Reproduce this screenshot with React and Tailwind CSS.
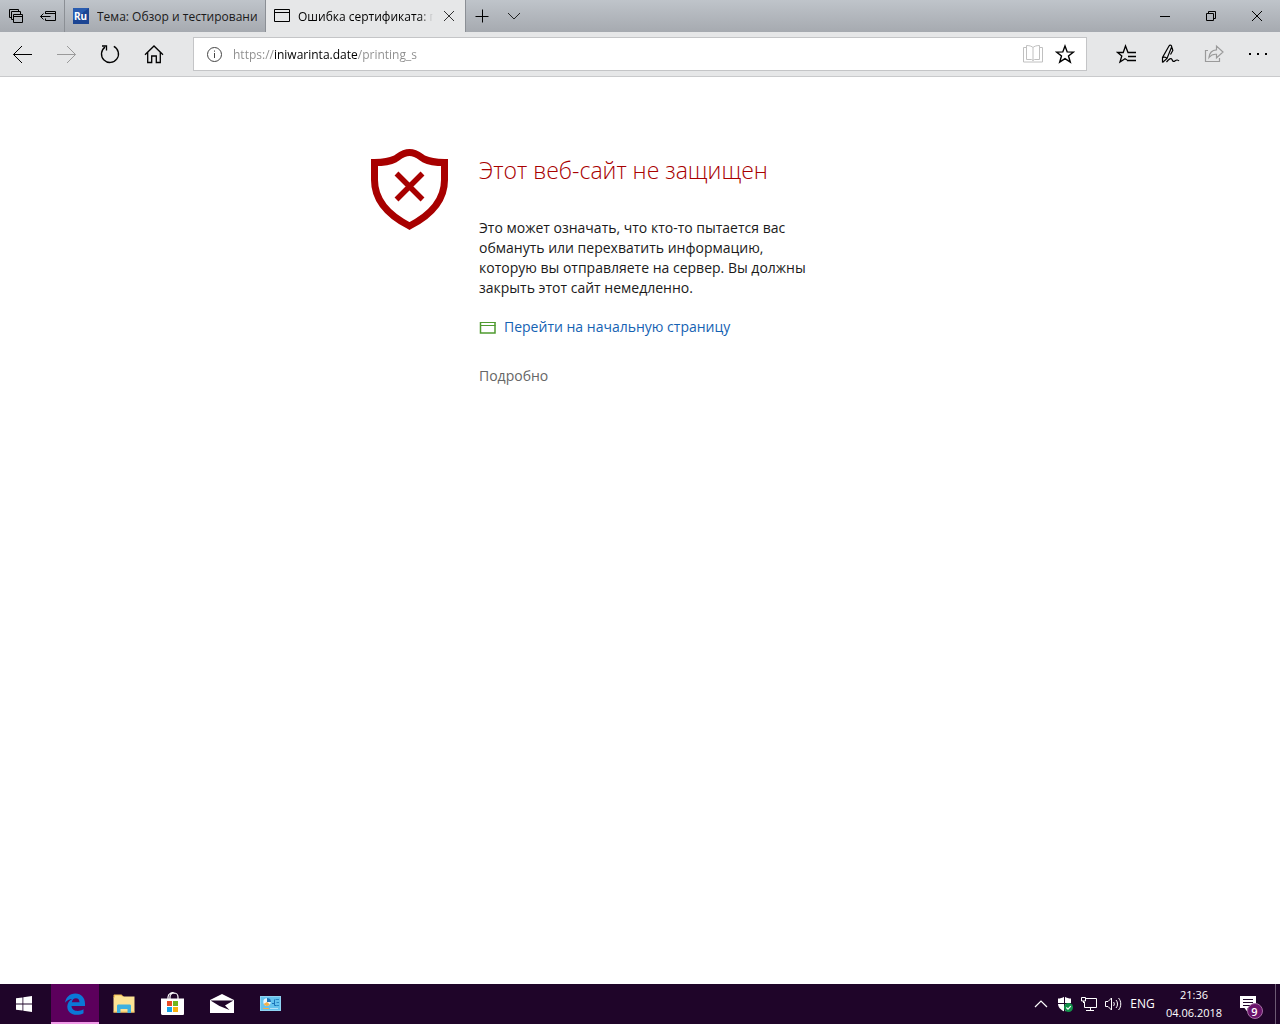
import React from "react";

const Icon = ({ size = 20, children, className = "" }) => (
  <svg
    width={size}
    height={size}
    viewBox={`0 0 ${size} ${size}`}
    fill="none"
    stroke="currentColor"
    strokeWidth="1"
    className={`block shrink-0 ${className}`}
    aria-hidden="true"
  >
    {children}
  </svg>
);

/* ---------- tab strip ---------- */

const StripButton = ({ label, className = "w-8", children }) => (
  <button
    type="button"
    aria-label={label}
    className={`flex h-8 shrink-0 items-center justify-center ${className}`}
  >
    {children}
  </button>
);

const TabStrip = () => (
  <header className="flex h-8 bg-linear-to-b from-[#bfc4ca] to-[#a6aab0] text-black">
    <StripButton label="Отложенные вкладки">
      <Icon size={16}>
        <path d="M3.500 9.500h-2v-8h9v2" />
        <path d="M5.500 11.500h-2v-8h9v3" />
        <path d="M5.500 6.500h9v8h-9zM5.500 8.500h9" />
      </Icon>
    </StripButton>
    <StripButton label="Отложить вкладки">
      <Icon size={16}>
        <path d="M5.500 6V3.500h10v9h-10V10.500M5.500 5.500h10" />
        <path d="M0.500 8.500h10M3.500 5.500l-3 3l3 3" />
      </Icon>
    </StripButton>

    <div className="flex w-[202px] items-center border-x border-[#8b8f95] pl-2">
      <svg width="16" height="16" viewBox="0 0 16 16" className="shrink-0" aria-hidden="true">
        <rect width="16" height="16" fill="#1c4593" />
        <path d="M0 0h16L0 12z" fill="#2a5caf" />
        <text x="1" y="12" fontSize="10" fontWeight="700" fontFamily="Noto Sans, sans-serif" fill="#fff">
          Ru
        </text>
      </svg>
      <button
        type="button"
        className="ml-2 flex-1 overflow-hidden pt-0.5 text-left text-[12px] leading-4 whitespace-nowrap text-[#1a1a1a]"
      >
        Тема: Обзор и тестирование
      </button>
      <span className="w-2 shrink-0" />
    </div>

    <div className="flex w-[199px] items-center bg-[#e6e7e8] pl-2">
      <Icon size={16}>
        <path d="M0.500 1.500h15v12h-15zM0.500 4.500h15" />
      </Icon>
      <button
        type="button"
        className="ml-2 flex-1 overflow-hidden mask-r-from-90% pt-0.5 text-left text-[12px] leading-4 whitespace-nowrap"
      >
        Ошибка сертификата: переход
      </button>
      <StripButton label="Закрыть вкладку">
        <Icon size={12} className="text-[#333]">
          <path d="M1 1l10 10M11 1L1 11" />
        </Icon>
      </StripButton>
    </div>

    <div className="flex border-l border-[#8b8f95]">
      <StripButton label="Новая вкладка">
        <Icon size={14}>
          <path d="M7.500 0.500v13M0.500 7.500h13" />
        </Icon>
      </StripButton>
      <StripButton label="Показать эскизы вкладок">
        <Icon size={14} className="text-[#222]">
          <path d="M1 4l6 6l6-6" />
        </Icon>
      </StripButton>
    </div>

    <div className="ml-auto flex">
      <StripButton label="Свернуть" className="w-[46px]">
        <Icon size={12}>
          <path d="M1 6.500h10" />
        </Icon>
      </StripButton>
      <StripButton label="Свернуть в окно" className="w-[46px]">
        <Icon size={12}>
          <path d="M1.500 3.500h7v7h-7zM3.500 3.500v-2h7v7h-2" />
        </Icon>
      </StripButton>
      <StripButton label="Закрыть" className="w-[46px]">
        <Icon size={12}>
          <path d="M1 1l10 10M11 1L1 11" />
        </Icon>
      </StripButton>
    </div>
  </header>
);

/* ---------- address bar ---------- */

const ToolButton = ({ label, disabled, children }) => (
  <button
    type="button"
    aria-label={label}
    disabled={disabled}
    className="flex h-11 w-11 shrink-0 items-center justify-center text-black disabled:text-[#9a9a9a]"
  >
    {children}
  </button>
);

const Toolbar = () => (
  <nav className="flex h-[45px] items-center border-b border-[#c9cacc] bg-[#e6e7e8]">
    <ToolButton label="Назад">
      <Icon>
        <path d="M1.500 10.500h18.500M10 2l-8.500 8.500l8.500 8.500" />
      </Icon>
    </ToolButton>
    <ToolButton label="Вперед" disabled>
      <Icon>
        <path d="M1 10.500h18.500M11 2l8.500 8.500l-8.500 8.500" />
      </Icon>
    </ToolButton>
    <ToolButton label="Обновить">
      <Icon>
        <path d="M13.800 2.400A8.500 8.500 0 1 1 5 3.100" strokeWidth="1.300" />
        <path d="M2 2h4.500v4.500" strokeWidth="1.300" />
      </Icon>
    </ToolButton>
    <ToolButton label="Домашняя страница">
      <Icon>
        <path d="M1 10.800L10 2l9 8.800M3.700 8.500v10h4v-6.500h4.600v6.500h4v-10" strokeWidth="1.300" />
      </Icon>
    </ToolButton>

    <div className="mx-[17px] flex h-[34px] min-w-0 flex-1 items-center border border-[#c4c5c7] bg-white pl-3">
      <button type="button" aria-label="Сведения о веб-сайте" className="text-[#444]">
        <Icon size={17}>
          <circle cx="8.500" cy="8.500" r="7" />
          <path d="M8.500 7v5M8.500 4.500v1.200" />
        </Icon>
      </button>
      <input
        type="text"
        aria-label="Адресная строка"
        defaultValue="https://iniwarinta.date/printing_s"
        className="ml-2.5 min-w-0 flex-1 bg-[linear-gradient(to_right,#8c8c8c_41px,#000_41px,#000_125px,#8c8c8c_125px)] bg-clip-text pt-0.5 text-[12px] leading-5 text-transparent caret-black outline-none"
      />
      <button
        type="button"
        aria-label="Режим чтения"
        disabled
        className="flex w-8 justify-center text-[#c0c0c0]"
      >
        <Icon size={20}>
          <path d="M10 3.500C9 2.500 7 1.500 3.500 1.500v14h5l1.500 1l1.500-1h5V1.500C13 1.500 11 2.500 10 3.500v13" />
          <path d="M3.500 3.500h-3v14.500h19V3.500h-3" />
        </Icon>
      </button>
      <button
        type="button"
        aria-label="Добавить в избранное"
        className="mr-[5px] flex w-8 justify-center"
      >
        <Icon size={20}>
          <path
            d="M10 2l2.200 5.900l6.300 0.200l-5 3.900l1.800 6.200L10 14.700l-5.300 3.500l1.800-6.200l-5-3.900l6.300-0.200z"
            strokeWidth="1.400"
          />
        </Icon>
      </button>
    </div>

    <ToolButton label="Избранное">
      <Icon>
        <path
          d="M20 8.500H12L9.500 2L7.200 8.500H1.500l4.300 3.500l-1.800 6l5-3.300l2 1.300"
          strokeWidth="1.300"
        />
        <path d="M12 12.500h8M11 16.500h9" strokeWidth="1.300" />
      </Icon>
    </ToolButton>
    <ToolButton label="Добавить заметки">
      <Icon>
        <path
          d="M2.500 18.500V13.500L9 2c1-1.700 3.200-0.700 2.500 1.300L7 14.500L2.500 18.500M2.500 13.500c2-0.700 3.500-0.500 4.500 1M12 3.500l0.800 3l-2.300 4"
          strokeWidth="1.200"
        />
        <path d="M6.500 18c2.500-3 4.500-4.500 5.500-2.500c0.700 2 1.500 2.500 3.200 1.200c1.500-1.200 3-0.700 3.800 0.300" strokeWidth="1.200" />
      </Icon>
    </ToolButton>
    <ToolButton label="Поделиться" disabled>
      <Icon>
        <path d="M4 6.500H1.500v11h14V14" strokeWidth="1.200" />
        <path
          d="M5 13.500C5.500 8 8 6 12.500 5.800V2l6.500 6l-6.500 6V10.300C9 10 7 11 5 13.500z"
          strokeWidth="1.200"
        />
      </Icon>
    </ToolButton>
    <ToolButton label="Параметры и прочее">
      <Icon>
        <path d="M1 10h2M9 10h2M17 10h2" strokeWidth="2" />
      </Icon>
    </ToolButton>
  </nav>
);

/* ---------- error page ---------- */

const ErrorPage = () => (
  <main className="flex-1 bg-white px-4 pt-[72px]">
    <div className="mx-auto flex max-w-[540px] gap-[31px]">
      <svg width="78" height="82" viewBox="0 0 78 82" fill="none" stroke="#a80000" className="shrink-0" aria-hidden="true">
        <path
          d="M39.500 3.500C33 3.500 29 7.500 25 10C19 13 12 13.500 4.500 13.500V31C4.500 52 18 66 39.500 77C61 66 74.500 52 74.500 31V13.500C67 13.500 60 13 54 10C50 7.500 46 3.500 39.500 3.500z"
          strokeWidth="7"
        />
        <path d="M26.500 24.500l26 26M52.500 24.500l-26 26" strokeWidth="5.500" />
      </svg>
      <div className="w-[340px]">
        <h1 className="pt-[5px] text-[23px] leading-8 font-light text-[#a80000]">
          Этот веб-сайт не защищен
        </h1>
        <p className="mt-8 text-[14px] leading-5 text-[#1a1a1a]">
          Это может означать, что кто-то пытается вас обмануть или перехватить
          информацию, которую вы отправляете на сервер. Вы должны закрыть этот
          сайт немедленно.
        </p>
        <a href="#start" className="mt-[19px] flex items-center text-[14px] leading-5 text-[#1562b3]">
          <svg width="17" height="14" viewBox="0 0 17 14" fill="none" stroke="#4f9a2f" className="mr-2" aria-hidden="true">
            <path d="M1.500 2v11h14.500V2" strokeWidth="1.500" />
            <path d="M1 2.500h15.500M1 5.500h15.500" strokeWidth="1" />
          </svg>
          Перейти на начальную страницу
        </a>
        <button type="button" className="mt-[29px] block text-[14px] leading-5 text-[#666]">
          Подробно
        </button>
      </div>
    </div>
  </main>
);

/* ---------- taskbar ---------- */

const TaskButton = ({ label, active, children }) => (
  <button
    type="button"
    aria-label={label}
    className={`flex h-10 w-12 items-center justify-center ${
      active ? "border-b-2 border-[#f09ae8] bg-[#5c005c] pt-0.5" : ""
    }`}
  >
    {children}
  </button>
);

const TrayButton = ({ label, children }) => (
  <button type="button" aria-label={label} className="flex h-10 w-6 items-center justify-center">
    {children}
  </button>
);

const Taskbar = () => (
  <footer className="flex h-10 bg-[#1f0529] text-white">
    <TaskButton label="Пуск">
      <Icon size={16}>
        <path
          d="M0 2.300L6.500 1.400V7.600H0zM7.300 1.300L16 0V7.600H7.300zM0 8.400H6.500V14.600L0 13.700zM7.300 8.400H16V16L7.300 14.700z"
          fill="#fff"
          stroke="none"
        />
      </Icon>
    </TaskButton>
    <div className="ml-[3px] flex gap-px">
      <TaskButton label="Microsoft Edge" active>
        <svg width="22" height="22" viewBox="0 0 22 22" aria-hidden="true">
          <path
            d="M1 9.800C1.800 4.500 5.500 0.500 11.300 0.500C17.500 0.500 21 5 21 10.500V13H7.500C7.700 16.500 10.500 17.900 13.500 17.900C15.900 17.900 17.900 17.200 19.500 16.200V20.300C17.600 21.300 15.300 21.800 12.800 21.800C7 21.800 3.300 18.500 3.300 13.500C3.300 10 5.300 7.300 8.300 5.900C5.300 6 2.700 7.200 1 9.800zM7.800 9.300H15.500C15.500 6.800 14.200 5.200 11.900 5.200C9.700 5.200 8.200 6.800 7.800 9.300z"
            fill="#0b78d7"
            fillRule="evenodd"
          />
        </svg>
      </TaskButton>
      <TaskButton label="Проводник">
        <svg width="22" height="20" viewBox="0 0 22 20" aria-hidden="true">
          <path d="M0.500 4V1.500C0.500 1 1 0.500 1.500 0.500H8.500L10.500 2.500V4z" fill="#f3bf55" />
          <path d="M2 1.500H7.500L9 2.500H21.500V18.500H0.500V3.500H2z" fill="#fde294" />
          <path d="M0.500 17.500H21.500V18.500H0.500z" fill="#f3bf55" />
          <path d="M4 19V12C4 11 4.500 10.500 5.500 10.500H16.500C17.500 10.500 18 11 18 12V19H14.500V15H7.500V19z" fill="#3db1e0" />
        </svg>
      </TaskButton>
      <TaskButton label="Microsoft Store">
        <svg width="24" height="24" viewBox="0 0 24 24" aria-hidden="true">
          <path d="M7 7V5a4.500 4.500 0 0 1 7-3.500M9 7V5a4 4 0 0 1 8 0V7" fill="none" stroke="#fff" strokeWidth="1.200" />
          <path d="M0 6.500H23V21.500C23 22.500 22.500 23 21.500 23H2C1 23 0 22.500 0 21.500z" fill="#fff" />
          <path d="M6 9h5v5h-5z" fill="#e84a24" />
          <path d="M12 9h5v5h-5z" fill="#72b51c" />
          <path d="M6 15h5v5h-5z" fill="#14a4ea" />
          <path d="M12 15h5v5h-5z" fill="#f9b30f" />
        </svg>
      </TaskButton>
      <TaskButton label="Почта">
        <svg width="24" height="20" viewBox="0 0 24 20" aria-hidden="true">
          <path d="M0 6L12 0L24 6V19H0z" fill="#fff" />
          <path d="M0.500 6.500H23.500L15 11.500L19.500 16L9.500 12z" fill="#1f0529" />
        </svg>
      </TaskButton>
      <TaskButton label="Панель управления">
        <svg width="22" height="16" viewBox="0 0 22 16" aria-hidden="true">
          <rect x="0.500" y="0.500" width="20" height="14" fill="#65c3ee" stroke="#8fd3f2" />
          <circle cx="7" cy="6" r="3.700" fill="#e9f6fc" />
          <path d="M7 6V2A4 4 0 0 1 11 6z" fill="#1b73b8" />
          <path d="M7 6L3.500 8A4 4 0 0 0 10 8.500z" fill="#f3b14c" />
          <path d="M12 7.500h3M14.500 3.500v6h2" stroke="#1b73b8" fill="none" />
          <path d="M15.500 3.500h3.500M16.500 6.500h2.500M16.500 9.500h2.500" stroke="#2b87c5" />
          <path d="M3 12.500h6" stroke="#f3b14c" />
          <path d="M10 12.500h8" stroke="#b4e2f7" />
        </svg>
      </TaskButton>
    </div>

    <div className="ml-auto flex items-center">
      <TrayButton label="Отображать скрытые значки">
        <Icon size={14}>
          <path d="M1 10l6-6l6 6" strokeWidth="1.200" />
        </Icon>
      </TrayButton>
      <TrayButton label="Защитник Windows">
        <Icon size={16}>
          <path
            d="M7.500 0.500C5.500 2 3 2.500 1 2.500V7.500C1 11.500 4 14 7.500 15.500C11 14 14 11.500 14 7.500V2.500C12 2.500 9.500 2 7.500 0.500z"
            fill="#fff"
            stroke="none"
          />
          <path d="M7.500 0v16M0 7.500h15" stroke="#1f0529" />
          <circle cx="11.500" cy="11.500" r="4.500" fill="#12924a" stroke="none" />
          <path d="M9.300 11.500l1.700 1.700l2.800-3" stroke="#fff" strokeWidth="1.200" />
        </Icon>
      </TrayButton>
      <TrayButton label="Сеть">
        <Icon size={16}>
          <path d="M5 2.500h10.500v9h-12V6M9.500 11.500v3M5 14.500h8" />
          <path d="M0.500 1.500h4v3.500h-4zM2.500 5v2" />
        </Icon>
      </TrayButton>
      <TrayButton label="Громкость">
        <Icon size={18}>
          <path d="M1.500 6.500h2.500l3.500-3.500v12l-3.500-3.500h-2.500z" />
          <path d="M9.500 7c1 1 1 3 0 4M12 5c2 2 2 6 0 8M14.500 3c3 3 3 9 0 12" />
        </Icon>
      </TrayButton>
      <button type="button" className="w-[35px] text-center text-[12px] leading-4">
        ENG
      </button>
      <button type="button" className="w-[68px] text-center text-[11px] leading-[18px]">
        <time className="block">21:36</time>
        <time className="block">04.06.2018</time>
      </button>
      <button
        type="button"
        aria-label="Центр уведомлений"
        className="flex h-10 w-[47px] items-center justify-center"
      >
        <span className="relative block">
          <Icon size={24}>
            <path d="M0 4h16v12h-8.500v4l-3-4h-4.500z" fill="#fff" stroke="none" />
            <path d="M3 7.500h10M3 10.500h10M3 13.500h7" stroke="#1f0529" />
          </Icon>
          <span className="absolute top-[11px] left-[7px] flex h-4 w-4 items-center justify-center rounded-full border border-[#a671a6] bg-[#6b146b] text-[11px] leading-none font-semibold">
            9
          </span>
        </span>
      </button>
      <button
        type="button"
        aria-label="Свернуть все окна"
        className="h-10 w-[5px] border-l border-[#6c5a73]"
      />
    </div>
  </footer>
);

export default function App() {
  return (
    <div className="flex min-h-screen flex-col font-['Open_Sans','Noto_Sans',sans-serif]">
      <TabStrip />
      <Toolbar />
      <ErrorPage />
      <Taskbar />
    </div>
  );
}
